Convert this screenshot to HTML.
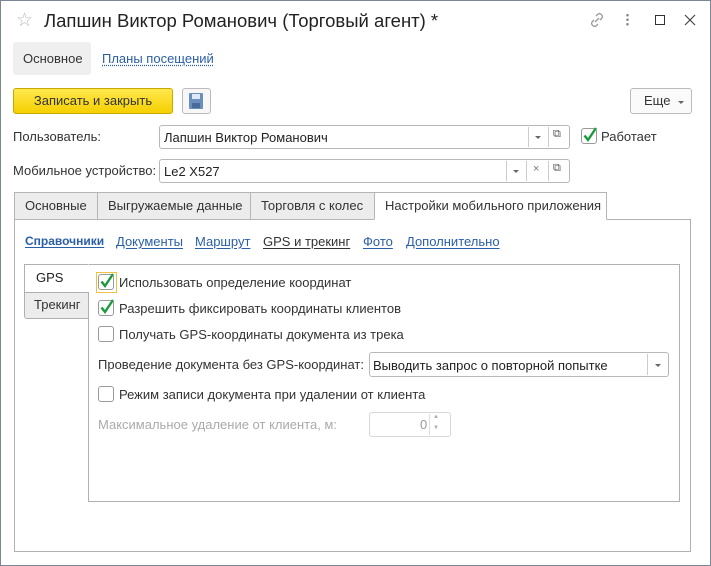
<!DOCTYPE html>
<html><head><meta charset="utf-8"><style>
*{box-sizing:border-box;margin:0;padding:0}
body{width:711px;height:566px;overflow:hidden;background:#fff;font-family:"Liberation Sans","DejaVu Sans",sans-serif;font-size:13px;color:#333;position:relative}
.a{position:absolute;white-space:nowrap}
.win{position:absolute;left:0;top:0;width:711px;height:566px;border:1px solid #7c8796}
.inp{position:absolute;border:1px solid #b8b8b8;border-radius:3px;background:#fff}
.cb{position:absolute;width:16px;height:16px;border:1px solid #9a9a9a;border-radius:3px;background:#fff}
.ck{position:absolute;width:18px;height:18px}
.lnk{color:#2a5ea8;text-decoration:underline;text-underline-offset:2px}
.tab{position:absolute;top:192px;height:28px;background:#ececec;border:1px solid #b5b5b5;line-height:26px;padding-left:10px;color:#333}
.sep{position:absolute;top:1px;bottom:1px;width:1px;background:#ccc}
.tri{position:absolute;width:0;height:0;border-left:3px solid transparent;border-right:3px solid transparent;border-top:3px solid #666}
</style></head><body>
<div class="win"></div>
<div class="a" style="left:16px;top:9px;font-size:19px;color:#bbb">☆</div>
<div class="a" style="left:44px;top:10px;font-size:18.5px;color:#222">Лапшин Виктор Романович (Торговый агент) *</div>
<svg class="a" style="left:588px;top:11px" width="18" height="18" viewBox="0 0 18 18" fill="none" stroke="#999" stroke-width="1.3"><path d="M8 5l2-2a3 3 0 0 1 4 4l-2 2M10 13l-2 2a3 3 0 0 1-4-4l2-2M7 11l4-4"/></svg>
<div class="a" style="left:626px;top:13px;width:3px;height:13px;background:radial-gradient(circle,#888 1.2px,transparent 1.4px) 0 0/3px 4.5px"></div>
<div class="a" style="left:655px;top:15px;width:10px;height:10px;border:1.3px solid #333"></div>
<svg class="a" style="left:684px;top:14px" width="12" height="12" viewBox="0 0 12 12" stroke="#444" stroke-width="1.2"><path d="M1 1L11 11M11 1L1 11"/></svg>

<div class="a" style="left:13px;top:42px;width:78px;height:33px;background:#efefef;border-radius:3px;line-height:33px;padding-left:10px;color:#333">Основное</div>
<div class="a lnk" style="left:102px;top:51px;text-decoration-style:dotted">Планы посещений</div>

<div class="a" style="left:13px;top:88px;width:160px;height:26px;background:linear-gradient(#ffe84d,#f5d000);border:1px solid #c9a800;border-radius:3px;line-height:24px;text-align:center;color:#333">Записать и закрыть</div>
<div class="a" style="left:182px;top:88px;width:29px;height:26px;border:1px solid #bbb;border-radius:3px;background:#f7f7f7"></div>
<div class="a" style="left:189px;top:93px;width:14px;height:16px;background:#6a8fbf;border-radius:1px"></div>
<div class="a" style="left:192px;top:94px;width:8px;height:5px;background:#dfe8f4"></div>
<div class="a" style="left:192px;top:103px;width:8px;height:5px;background:#4a6a99"></div>
<div class="a" style="left:630px;top:88px;width:62px;height:26px;border:1px solid #bbb;border-radius:3px;background:#fafafa;line-height:24px;padding-left:13px;color:#333">Еще</div>
<div class="tri" style="left:678px;top:101px"></div>

<div class="a" style="left:13px;top:129px">Пользователь:</div>
<div class="inp" style="left:159px;top:125px;width:411px;height:24px"><div class="a" style="left:4px;top:4px;color:#222">Лапшин Виктор Романович</div><div class="sep" style="left:368px"></div><div class="tri" style="left:375px;top:10px"></div><div class="sep" style="left:388px"></div><div class="a" style="left:393px;top:2px;font-size:11px;color:#555">⧉</div></div>
<div class="cb" style="left:581px;top:128px"></div>
<svg class="ck" style="left:581px;top:126px" viewBox="0 0 18 18"><path d="M3.5 9.5L7 14L15 2" fill="none" stroke="#1a9a3a" stroke-width="2.4"/></svg>
<div class="a" style="left:601px;top:129px">Работает</div>

<div class="a" style="left:13px;top:163px">Мобильное устройство:</div>
<div class="inp" style="left:159px;top:159px;width:411px;height:24px"><div class="a" style="left:4px;top:4px;color:#222">Le2 X527</div><div class="sep" style="left:346px"></div><div class="tri" style="left:353px;top:10px"></div><div class="sep" style="left:366px"></div><div class="a" style="left:373px;top:3px;font-size:11px;color:#777">×</div><div class="sep" style="left:388px"></div><div class="a" style="left:393px;top:2px;font-size:11px;color:#555">⧉</div></div>

<div class="a" style="left:14px;top:219px;width:677px;height:333px;border:1px solid #b0b0b0"></div>
<div class="tab" style="left:14px;width:84px">Основные</div>
<div class="tab" style="left:97px;width:154px">Выгружаемые данные</div>
<div class="tab" style="left:250px;width:125px">Торговля с колес</div>
<div class="tab" style="left:374px;width:233px;background:#fff;border-bottom-color:#fff;height:28px">Настройки мобильного приложения</div>

<div class="a lnk" style="left:25px;top:234px;font-weight:bold;font-size:12px">Справочники</div>
<div class="a lnk" style="left:116px;top:234px">Документы</div>
<div class="a lnk" style="left:195px;top:234px">Маршрут</div>
<div class="a" style="left:263px;top:234px;color:#333;text-decoration:underline;text-underline-offset:2px">GPS и трекинг</div>
<div class="a lnk" style="left:363px;top:234px">Фото</div>
<div class="a lnk" style="left:406px;top:234px">Дополнительно</div>

<div class="a" style="left:88px;top:264px;width:592px;height:238px;border:1px solid #b0b0b0"></div>
<div class="a" style="left:24px;top:264px;width:65px;height:29px;background:#fff;border:1px solid #b0b0b0;border-right-color:#fff;padding:5px 0 0 11px;color:#222">GPS</div>
<div class="a" style="left:24px;top:292px;width:65px;height:27px;background:#ececec;border:1px solid #b0b0b0;border-radius:0 0 0 3px;padding:4px 0 0 9px;color:#333">Трекинг</div>

<div class="a" style="left:96px;top:272px;width:21px;height:21px;border:1px solid #f0c040"></div>
<div class="cb" style="left:98px;top:274px"></div>
<svg class="ck" style="left:98px;top:272px" viewBox="0 0 18 18"><path d="M3.5 9.5L7 14L15 2" fill="none" stroke="#1a9a3a" stroke-width="2.4"/></svg>
<div class="a" style="left:119px;top:275px">Использовать определение координат</div>
<div class="cb" style="left:98px;top:300px"></div>
<svg class="ck" style="left:98px;top:298px" viewBox="0 0 18 18"><path d="M3.5 9.5L7 14L15 2" fill="none" stroke="#1a9a3a" stroke-width="2.4"/></svg>
<div class="a" style="left:119px;top:301px">Разрешить фиксировать координаты клиентов</div>
<div class="cb" style="left:98px;top:326px"></div>
<div class="a" style="left:119px;top:327px">Получать GPS-координаты документа из трека</div>
<div class="a" style="left:98px;top:357px">Проведение документа без GPS-координат:</div>
<div class="inp" style="left:369px;top:352px;width:300px;height:25px"><div class="a" style="left:3px;top:5px;color:#222">Выводить запрос о повторной попытке</div><div class="sep" style="left:277px"></div><div class="tri" style="left:285px;top:11px"></div></div>
<div class="cb" style="left:98px;top:386px"></div>
<div class="a" style="left:119px;top:387px">Режим записи документа при удалении от клиента</div>
<div class="a" style="left:98px;top:417px;color:#aaa">Максимальное удаление от клиента, м:</div>
<div class="inp" style="left:369px;top:412px;width:82px;height:25px;border-color:#d8d8d8"><div class="a" style="left:50px;top:4px;color:#999">0</div><div class="sep" style="left:59px;background:#ddd"></div><div class="a" style="left:63px;top:1px;font-size:6px;color:#aaa">▲</div><div class="a" style="left:63px;top:12px;font-size:6px;color:#aaa">▼</div></div>
</body></html>
